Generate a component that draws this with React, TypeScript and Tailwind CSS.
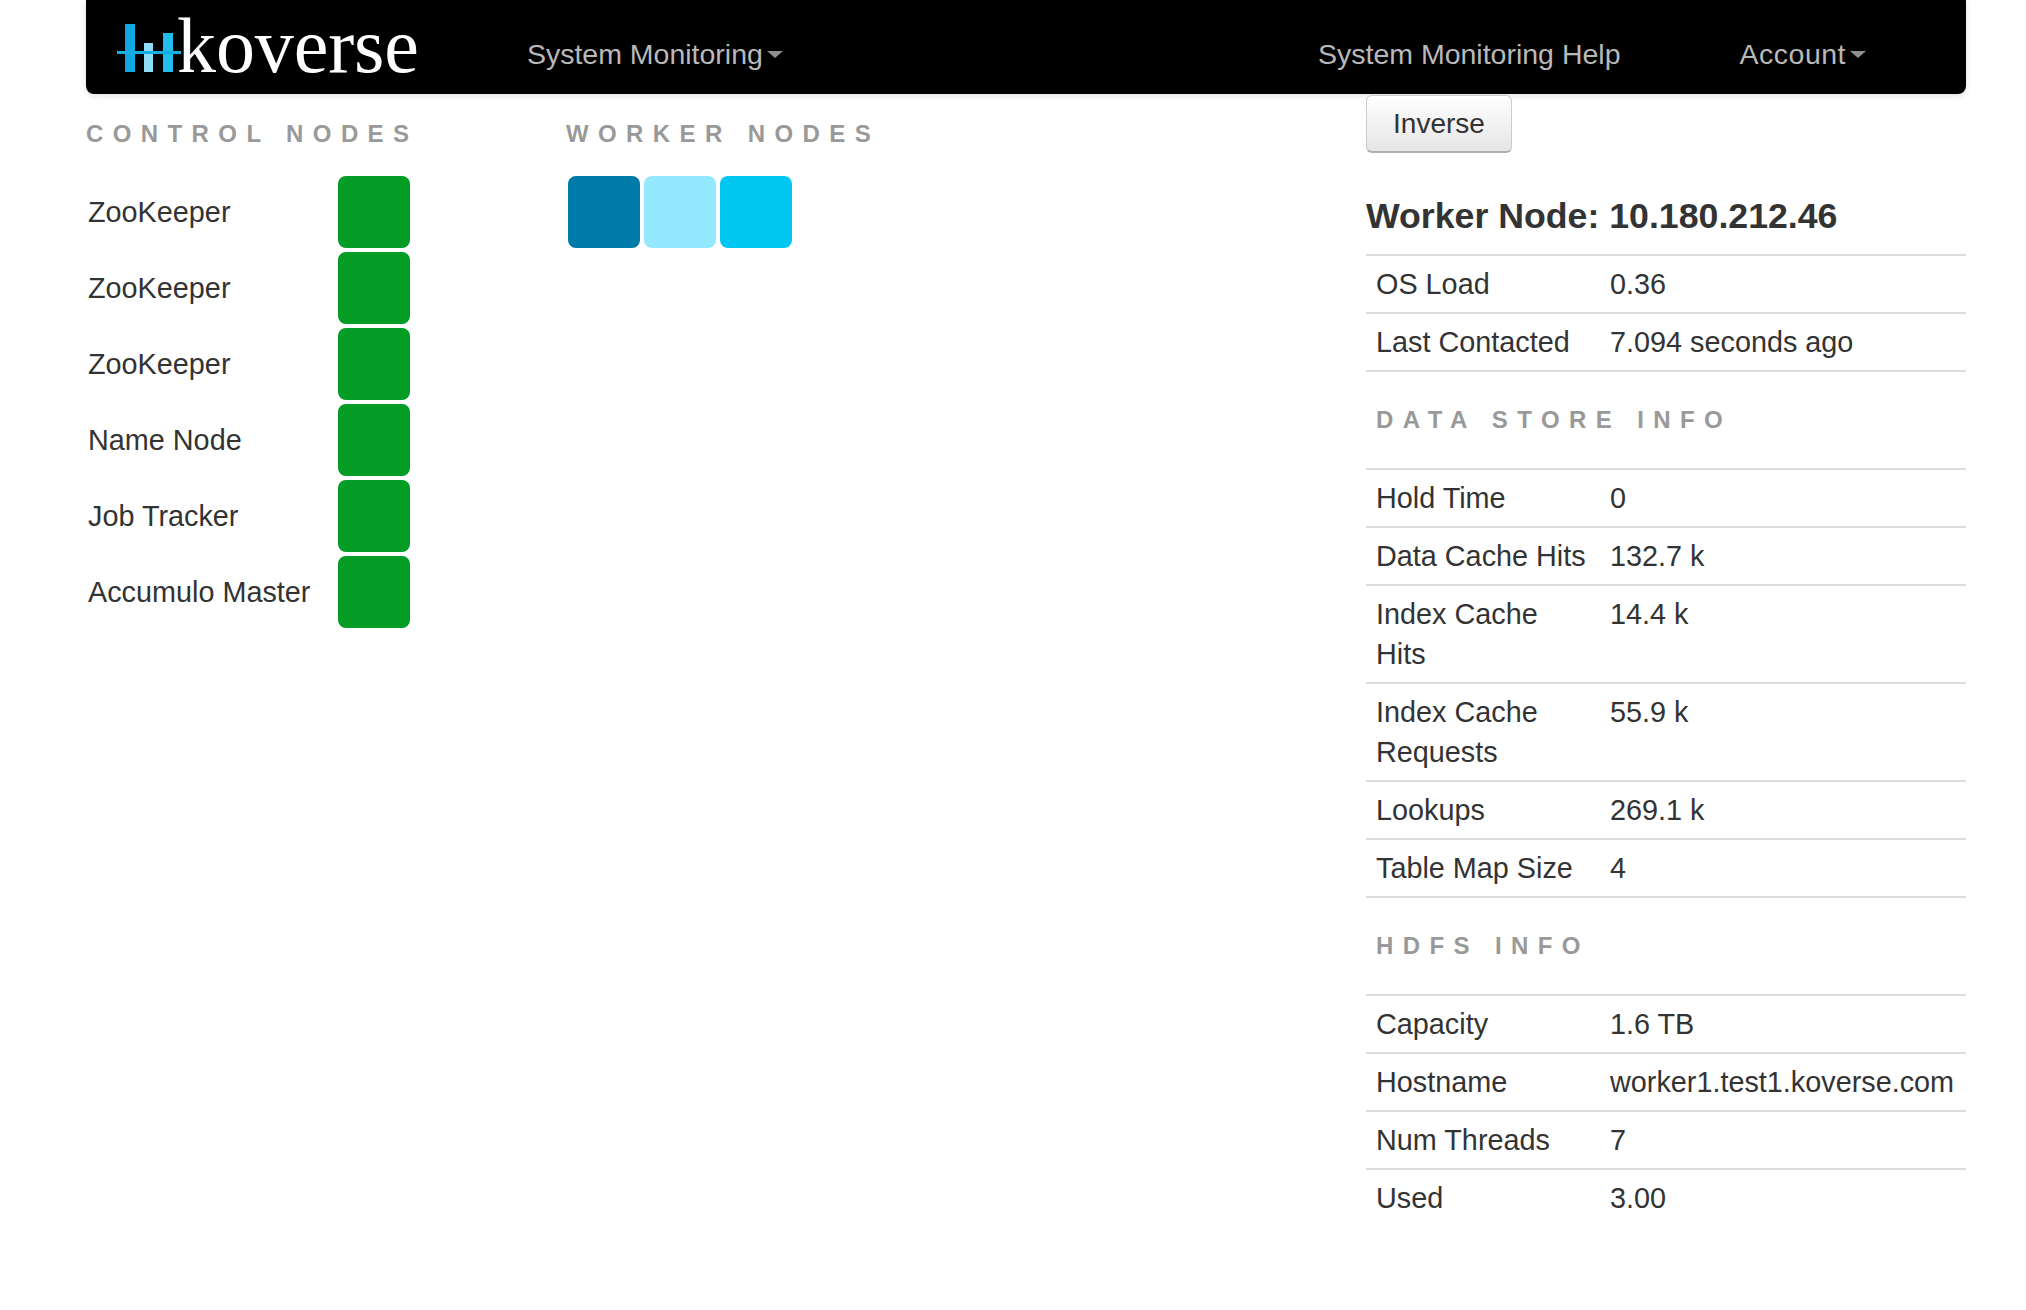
import React from 'react';

const controlNodes = ['ZooKeeper', 'ZooKeeper', 'ZooKeeper', 'Name Node', 'Job Tracker', 'Accumulo Master'];
const workerColors = ['bg-[#007aa8]', 'bg-[#94e8ff]', 'bg-[#00c7f2]'];

const summary = [
  ['OS Load', '0.36'],
  ['Last Contacted', '7.094 seconds ago'],
];
const dataStore = [
  ['Hold Time', '0'],
  ['Data Cache Hits', '132.7 k'],
  ['Index Cache Hits', '14.4 k'],
  ['Index Cache Requests', '55.9 k'],
  ['Lookups', '269.1 k'],
  ['Table Map Size', '4'],
];
const hdfs = [
  ['Capacity', '1.6 TB'],
  ['Hostname', 'worker1.test1.koverse.com'],
  ['Num Threads', '7'],
  ['Used', '3.00'],
];

function Caret() {
  return <span className="ml-[4px] mt-[1px] inline-block h-0 w-0 border-x-[8px] border-t-[7px] border-x-transparent border-t-[#8f8f8f]" />;
}

function Logo() {
  return (
    <div className="flex items-start">
      <svg width="66" height="94" viewBox="0 0 66 94" className="shrink-0">
        <rect x="8" y="24" width="10" height="48" fill="#0fa9e0" />
        <rect x="27" y="43" width="9" height="29" fill="#8edcf5" />
        <rect x="46" y="33" width="10" height="39" fill="#20bdeb" />
        <rect x="0" y="51" width="64" height="3" fill="#14aee4" />
      </svg>
      <span className="-ml-[6px] mt-[3px] font-['Liberation_Serif',serif] text-[78px] leading-[85px] tracking-[-0.1px] text-white">koverse</span>
    </div>
  );
}

function SectionTitle({ children }: { children: React.ReactNode }) {
  return <h4 className="text-[24px] font-bold leading-[28px] tracking-[9.4px] whitespace-nowrap text-[#999999]">{children}</h4>;
}

function Rows({ rows }: { rows: string[][] }) {
  return (
    <div>
      {rows.map(([label, value]) => (
        <div key={label} className="grid grid-cols-[244px_1fr] border-t-[2px] border-[#dddddd] pt-[8px] pb-[8px] leading-[40px]">
          <div className="pl-[10px] pr-[20px]">{label}</div>
          <div className="whitespace-nowrap">{value}</div>
        </div>
      ))}
    </div>
  );
}

export default function App() {
  return (
    <div className="min-h-[1310px] bg-white font-['Liberation_Sans',sans-serif] text-[28.8px] text-[#333333]">
      <nav className="ml-[86px] mr-[60px] flex h-[94px] items-center rounded-b-[8px] bg-black pl-[31px] pt-[14px] text-[28.5px] text-[#b9b9b9] shadow-[0_2px_6px_rgba(0,0,0,0.12)]">
        <div className="-mt-[14px]">
          <Logo />
        </div>
        <div className="ml-[108px] flex items-center">
          System Monitoring
          <Caret />
        </div>
        <div className="ml-auto">System Monitoring Help</div>
        <div className="ml-[119px] mr-[100px] flex items-center tracking-[0.5px]">
          Account
          <Caret />
        </div>
      </nav>

      <div className="ml-[86px] mr-[60px] flex items-start">
        <section className="w-[480px] shrink-0 pt-[26px]">
          <SectionTitle>CONTROL NODES</SectionTitle>
          <div className="mt-[28px] flex flex-col gap-[4px]">
            {controlNodes.map((name, i) => (
              <div key={i} className="flex h-[72px] items-center">
                <div className="w-[252px] pl-[2px] pt-[1px]">{name}</div>
                <div className="h-[72px] w-[72px] rounded-[8px] bg-[#049c24]" />
              </div>
            ))}
          </div>
        </section>

        <section className="w-[800px] shrink-0 pt-[26px]">
          <SectionTitle>WORKER NODES</SectionTitle>
          <div className="mt-[28px] ml-[2px] flex gap-[4px]">
            {workerColors.map((c) => (
              <div key={c} className={`h-[72px] w-[72px] rounded-[8px] ${c}`} />
            ))}
          </div>
        </section>

        <section className="w-[600px] shrink-0">
          <button className="mt-[1px] block h-[58px] w-[146px] rounded-[6px] border border-[#cccccc] border-b-[#b0b0b0] border-b-[2px] bg-gradient-to-b from-white to-[#e6e6e6] text-[28px] text-[#333333]">
            Inverse
          </button>
          <h3 className="mt-[39px] mb-[14px] text-[35.7px] font-bold leading-[48px] whitespace-nowrap">Worker Node: 10.180.212.46</h3>
          <Rows rows={summary} />
          <div className="border-t-[2px] border-[#dddddd] pt-[34px] pb-[34px] pl-[10px]">
            <SectionTitle>DATA STORE INFO</SectionTitle>
          </div>
          <Rows rows={dataStore} />
          <div className="border-t-[2px] border-[#dddddd] pt-[34px] pb-[34px] pl-[10px]">
            <SectionTitle>HDFS INFO</SectionTitle>
          </div>
          <Rows rows={hdfs} />
        </section>
      </div>
    </div>
  );
}
